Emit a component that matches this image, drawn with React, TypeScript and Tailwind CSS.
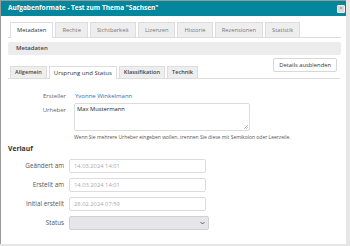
import React from "react";

const topTabs = ["Metadaten", "Rechte", "Sichtbarkeit", "Lizenzen", "Historie", "Rezensionen", "Statistik"];
const subTabs = ["Allgemein", "Ursprung und Status", "Klassifikation", "Technik"];

function DateRow({ label, value }: { label: string; value: string }) {
  return (
    <div className="flex items-center h-[14px] mb-[5px]">
      <div className="w-[63px] text-right text-[6.3px] text-[#555]">{label}</div>
      <div className="ml-[5px] w-[137px] h-[14px] border border-[#dcdcdc] rounded-[2px] flex items-center pl-[4px] text-[5.8px] text-[#aaa]">
        {value}
      </div>
    </div>
  );
}

export default function App() {
  return (
    <div className="w-[350px] h-[246px] bg-[#e6e6e6] overflow-hidden font-['Open_Sans',sans-serif]">
      <div className="w-[346px] h-[244px] bg-white border-t border-l border-[#9a9a9a] flex flex-col">
        {/* title bar */}
        <div className="h-[15px] bg-[#04869c] flex items-center justify-between pl-[7px] pr-[1px]">
          <span className="text-white font-bold text-[6.5px] leading-none">Aufgabenformate - Test zum Thema "Sachsen"</span>
          <div className="w-[8px] h-[8px] bg-[#d9d9d9] border border-[#f2f2f2] rounded-[1px] flex items-center justify-center text-[5px] text-[#666] leading-none">×</div>
        </div>
        {/* top tabs */}
        <div className="mt-[6px] mx-[7px] w-[333px] flex items-end gap-[2px] pl-[2px] border-b border-[#dddddd] h-[16px]">
          {topTabs.map((t, i) => (
            <div
              key={t}
              className={
                i === 0
                  ? "h-[16px] px-[6px] bg-white border border-b-0 border-[#dddddd] flex items-center text-[5.8px] text-[#333] -mb-px"
                  : "h-[15px] px-[6px] bg-[#eeeeee] border border-b-0 border-[#dddddd] flex items-center text-[5.8px] text-[#777]"
              }
            >
              {t}
            </div>
          ))}
        </div>
        {/* Metadaten bar */}
        <div className="mt-[4px] ml-[7px] w-[333px] h-[13px] bg-[#ececec] rounded-[2px] flex items-center pl-[8px] text-[6px] text-[#444] font-semibold">
          Metadaten
        </div>
        {/* sub tabs + button */}
        <div className="ml-[7px] w-[332px] h-[24px] flex items-end justify-between border-b border-[#dddddd]">
          <div className="flex items-end gap-[2px] pl-[2px]">
            {subTabs.map((t, i) => (
              <div
                key={t}
                className={
                  i === 1
                    ? "h-[13px] px-[4px] bg-white border border-b-0 border-[#dddddd] flex items-center text-[6px] text-[#333] -mb-px"
                    : "h-[12px] px-[4px] bg-[#eeeeee] border border-b-0 border-[#dddddd] flex items-center text-[5.6px] text-[#444] font-semibold"
                }
              >
                {t}
              </div>
            ))}
          </div>
          <div className="self-start mt-[3px] mr-[3px] h-[14px] px-[5px] border border-[#d8d8d8] rounded-[2px] flex items-center text-[5.8px] text-[#333] bg-white">
            Details ausblenden
          </div>
        </div>
        {/* Ersteller */}
        <div className="mt-[13px] flex items-center h-[8px]">
          <div className="w-[65px] text-right text-[6px] text-[#666]">Ersteller</div>
          <div className="ml-[9px] text-[6px] text-[#2f6fb5]">Yvonne Winkelmann</div>
        </div>
        {/* Urheber */}
        <div className="mt-[3px] flex items-start">
          <div className="w-[65px] text-right text-[6px] text-[#666] pt-[3px]">Urheber</div>
          <div className="ml-[8px] w-[176px] h-[28px] border border-[#dcdcdc] rounded-[2px] relative pl-[2px] pt-[1px] text-[5.8px] text-[#222]">
            Max Mustermann
            <svg className="absolute right-[1px] bottom-[1px]" width="4" height="4" viewBox="0 0 4 4">
              <path d="M4 0 L0 4 M4 2 L2 4" stroke="#999" strokeWidth="0.6" />
            </svg>
          </div>
        </div>
        <div className="ml-[73px] mt-[2px] text-[5px] text-[#555] leading-[8px]">
          Wenn Sie mehrere Urheber eingeben wollen, trennen Sie diese mit Semikolon oder Leerzeile.
        </div>
        {/* Verlauf */}
        <div className="ml-[7px] mt-[3px] text-[6.8px] font-bold text-[#333] leading-[10px]">Verlauf</div>
        <div className="mt-[5px]">
          <DateRow label="Geändert am" value="14.03.2024 14:01" />
          <DateRow label="Erstellt am" value="14.03.2024 14:01" />
          <DateRow label="Initial erstellt" value="28.02.2024 07:59" />
          <div className="flex items-center h-[14px]">
            <div className="w-[63px] text-right text-[6.3px] text-[#555]">Status</div>
            <div className="ml-[5px] w-[140px] h-[14px] border border-[#d0d0d4] rounded-[2px] bg-[#e6e6ea] flex items-center justify-end pr-[3px]">
              <svg width="5" height="4" viewBox="0 0 5 4">
                <path d="M0.5 1 L2.5 3 L4.5 1" stroke="#555" strokeWidth="0.9" fill="none" />
              </svg>
            </div>
          </div>
        </div>
      </div>
    </div>
  );
}
